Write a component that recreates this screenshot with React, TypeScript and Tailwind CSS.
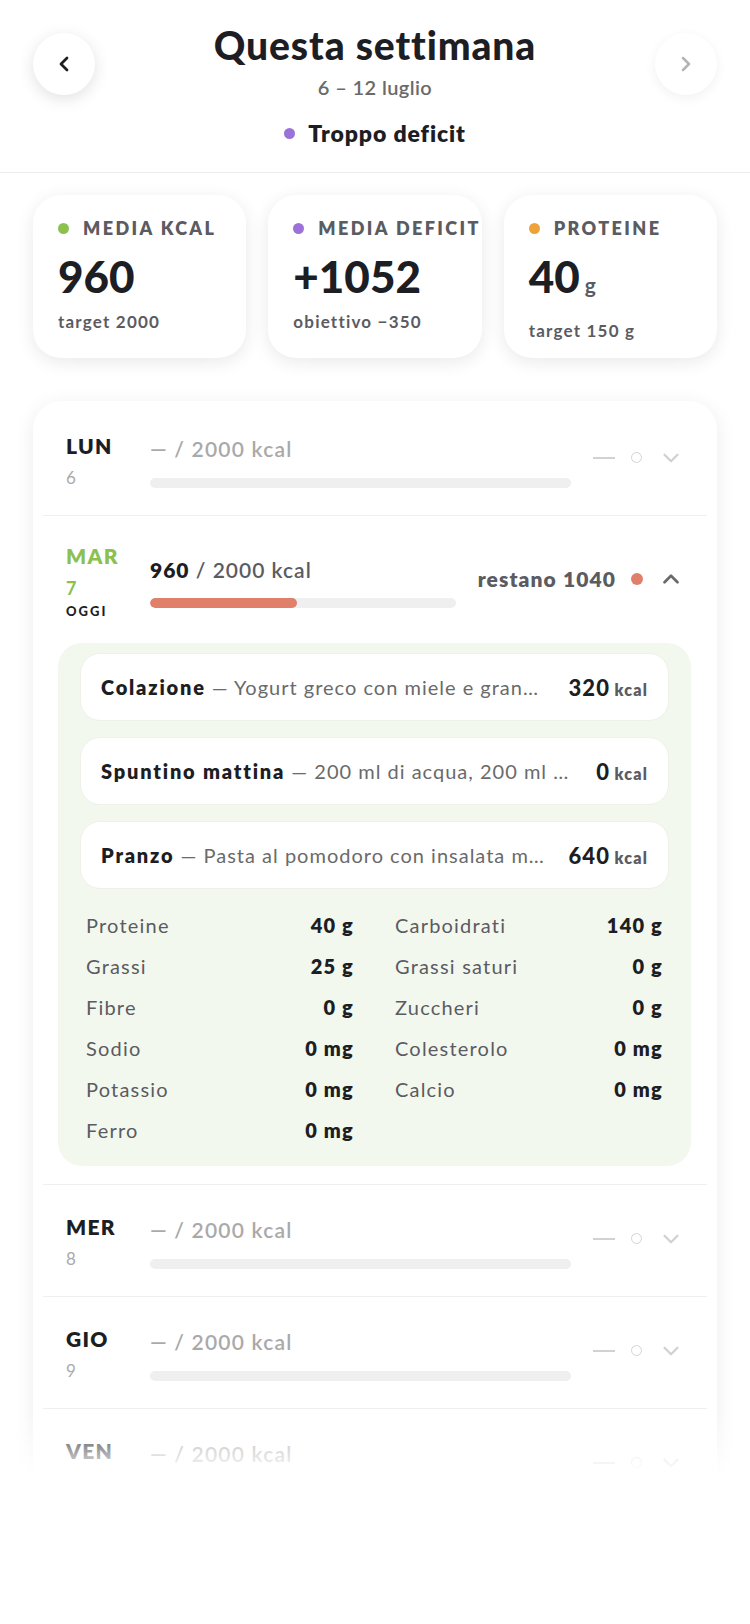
import { ChevronDown, ChevronLeft, ChevronRight, ChevronUp } from 'lucide-react'

type Stat = { label: string; dot: string; value: string; unit?: string; sub: string }

const stats: Stat[] = [
  { label: 'MEDIA KCAL', dot: 'bg-[#8cc152]', value: '960', sub: 'target 2000' },
  { label: 'MEDIA DEFICIT', dot: 'bg-[#9b72d9]', value: '+1052', sub: 'obiettivo −350' },
  { label: 'PROTEINE', dot: 'bg-[#f0a23a]', value: '40', unit: 'g', sub: 'target 150 g' },
]

const meals = [
  { name: 'Colazione', desc: 'Yogurt greco con miele e granola e frutti di bosco', kcal: 320 },
  { name: 'Spuntino mattina', desc: '200 ml di acqua, 200 ml di tè verde', kcal: 0 },
  { name: 'Pranzo', desc: 'Pasta al pomodoro con insalata mista', kcal: 640 },
]

const nutrients: [string, string][] = [
  ['Proteine', '40 g'],
  ['Carboidrati', '140 g'],
  ['Grassi', '25 g'],
  ['Grassi saturi', '0 g'],
  ['Fibre', '0 g'],
  ['Zuccheri', '0 g'],
  ['Sodio', '0 mg'],
  ['Colesterolo', '0 mg'],
  ['Potassio', '0 mg'],
  ['Calcio', '0 mg'],
  ['Ferro', '0 mg'],
]

function EmptyDay({ day, num }: { day: string; num: number }) {
  return (
    <div className="flex items-center gap-[22px] border-t border-[#efefef] pb-[26px] pl-[23px] pr-[23px] pt-[30px]">
      <div className="w-[62px] shrink-0">
        <div className="text-[21px] font-extrabold leading-[24px] tracking-[1.3px] text-[#1d1d24]">{day}</div>
        <div className="mt-[9px] text-[17px] leading-[22px] tracking-[0.5px] text-[#ababab]">{num}</div>
      </div>
      <div className="min-w-0 flex-1">
        <div className="whitespace-nowrap text-[21px] font-semibold leading-[26px] tracking-[1.2px] text-[#a9a9a9]">
          — / 2000 kcal
        </div>
        <div className="mt-[16px] h-[10px] rounded-full bg-[#efefef]" />
      </div>
      <div className="-mt-[8px] flex items-center gap-[16px]">
        <span className="h-[2px] w-[22px] bg-[#d2d2d2]" />
        <span className="size-[11px] rounded-full border-[1.5px] border-[#d4d4d4]" />
        <ChevronDown className="size-[26px] text-[#d0d0d0]" strokeWidth={2} />
      </div>
    </div>
  )
}

export default function App() {
  return (
    <div className="relative h-[1624px] w-[750px] overflow-hidden bg-white font-['Lato',sans-serif] text-[#1d1d24]">
      {/* header */}
      <header className="grid grid-cols-[62px_1fr_62px] border-b border-[#ececec] px-[33px] pb-[25px] pt-[23px]">
        <button
          type="button"
          className="mt-[10px] flex size-[62px] items-center justify-center rounded-full bg-white shadow-[0_4px_16px_rgba(0,0,0,0.12)]"
        >
          <ChevronLeft className="size-[24px] text-[#1d1d24]" strokeWidth={2.75} />
        </button>
        <div className="flex flex-col items-center">
          <h1 className="whitespace-nowrap text-[39px] font-black leading-[44px] tracking-[0.9px]">Questa settimana</h1>
          <div className="mt-[7px] text-[20px] font-semibold leading-[26px] tracking-[0.4px] text-[#6a6a6a]">
            6 – 12 luglio
          </div>
          <div className="mt-[19px] flex items-center gap-[13px] text-[23px] font-extrabold leading-[28px] tracking-[0.9px]">
            <span className="size-[11px] rounded-full bg-[#9b72d9]" />
            Troppo deficit
          </div>
        </div>
        <button
          type="button"
          className="mt-[10px] flex size-[62px] items-center justify-center rounded-full bg-white shadow-[0_3px_12px_rgba(0,0,0,0.06)]"
        >
          <ChevronRight className="size-[24px] text-[#b4b4b4]" strokeWidth={2.5} />
        </button>
      </header>

      {/* stat cards */}
      <div className="grid grid-cols-3 gap-[22px] px-[33px] pt-[22px]">
        {stats.map((s) => (
          <div
            key={s.label}
            className="h-[163px] overflow-hidden rounded-[28px] bg-white pl-[25px] pt-[22px] shadow-[0_4px_18px_rgba(0,0,0,0.09)]"
          >
            <div className="flex items-center gap-[14px] whitespace-nowrap text-[18px] font-extrabold leading-[22px] tracking-[2.4px] text-[#5b5b62]">
              <span className={`size-[11px] shrink-0 rounded-full ${s.dot}`} />
              {s.label}
            </div>
            <div className="mt-[13px] flex items-baseline gap-[5px] leading-[48px]">
              <span className="text-[44px] font-black">{s.value}</span>
              {s.unit && <span className="text-[21px] font-bold text-[#5b5b62]">{s.unit}</span>}
            </div>
            <div className="mt-[11px] text-[17px] font-bold leading-[22px] tracking-[1.2px] text-[#5b5b62]">{s.sub}</div>
          </div>
        ))}
      </div>

      {/* week list */}
      <div className="mx-[33px] mt-[43px] rounded-[28px] bg-white px-[10px] pt-[3px] shadow-[0_4px_20px_rgba(0,0,0,0.08)]">
        <div className="[&>div:first-child]:border-t-0">
          <EmptyDay day="LUN" num={6} />

          {/* today */}
          <div className="border-t border-[#efefef] pb-[18px]">
            <div className="flex items-start gap-[22px] pl-[23px] pr-[23px] pt-[28px]">
              <div className="w-[62px] shrink-0">
                <div className="text-[21px] font-extrabold leading-[24px] tracking-[1.3px] text-[#8cc152]">MAR</div>
                <div className="mt-[9px] text-[18px] font-bold leading-[22px] text-[#8cc152]">7</div>
                <div className="mt-[4px] text-[13px] font-black leading-[16px] tracking-[2px]">OGGI</div>
              </div>
              <div className="mt-[13px] min-w-0 flex-1">
                <div className="whitespace-nowrap text-[21px] font-semibold leading-[26px] tracking-[1px] text-[#5b5b62]">
                  <span className="font-extrabold text-[#1d1d24]">960</span> / 2000 kcal
                </div>
                <div className="mt-[15px] h-[10px] overflow-hidden rounded-full bg-[#efefef]">
                  <div className="h-full rounded-full bg-[#e0806a]" style={{ width: `${(960 / 2000) * 100}%` }} />
                </div>
              </div>
              <div className="mt-[22px] flex items-center gap-[15px]">
                <span className="whitespace-nowrap text-[21px] font-extrabold leading-[26px] tracking-[1.1px] text-[#5b5b62]">
                  restano 1040
                </span>
                <span className="size-[12px] rounded-full bg-[#e0806a]" />
                <ChevronUp className="size-[26px] text-[#6a6a6a]" strokeWidth={2.5} />
              </div>
            </div>

            <div className="ml-[15px] mr-[16px] mt-[24px] rounded-[24px] bg-[#f3f8ee] px-[22px] pb-[23px] pt-[10px]">
              <div className="flex flex-col gap-[16px]">
                {meals.map((m) => (
                  <div
                    key={m.name}
                    className="flex h-[68px] items-center gap-[20px] rounded-[20px] border border-[#edf1e8] bg-white px-[20px]"
                  >
                    <div className="min-w-0 flex-1 truncate text-[20px] leading-[26px] tracking-[1px] text-[#6a6a6a]">
                      <span className="font-extrabold tracking-[1.8px] text-[#1d1d24]">{m.name}</span> — {m.desc}
                    </div>
                    <div className="shrink-0 whitespace-nowrap">
                      <span className="text-[22px] font-black tracking-[1.2px]">{m.kcal}</span>{' '}
                      <span className="text-[16px] font-extrabold tracking-[1.2px] text-[#5b5b62]">kcal</span>
                    </div>
                  </div>
                ))}
              </div>
              <div className="mt-[23px] grid grid-cols-2 gap-x-[41px] gap-y-[15px] px-[6px]">
                {nutrients.map(([k, v]) => (
                  <div key={k} className="flex items-center justify-between text-[20px] leading-[26px] tracking-[1.2px]">
                    <span className="text-[#5b5b62]">{k}</span>
                    <span className="font-extrabold">{v}</span>
                  </div>
                ))}
              </div>
            </div>
          </div>

          <EmptyDay day="MER" num={8} />
          <EmptyDay day="GIO" num={9} />
          <EmptyDay day="VEN" num={10} />
          <EmptyDay day="SAB" num={11} />
        </div>
      </div>

      {/* bottom fade */}
      <div className="pointer-events-none absolute inset-x-0 bottom-0 h-[210px] bg-gradient-to-b from-white/0 via-white via-[30%] to-white" />
    </div>
  )
}
